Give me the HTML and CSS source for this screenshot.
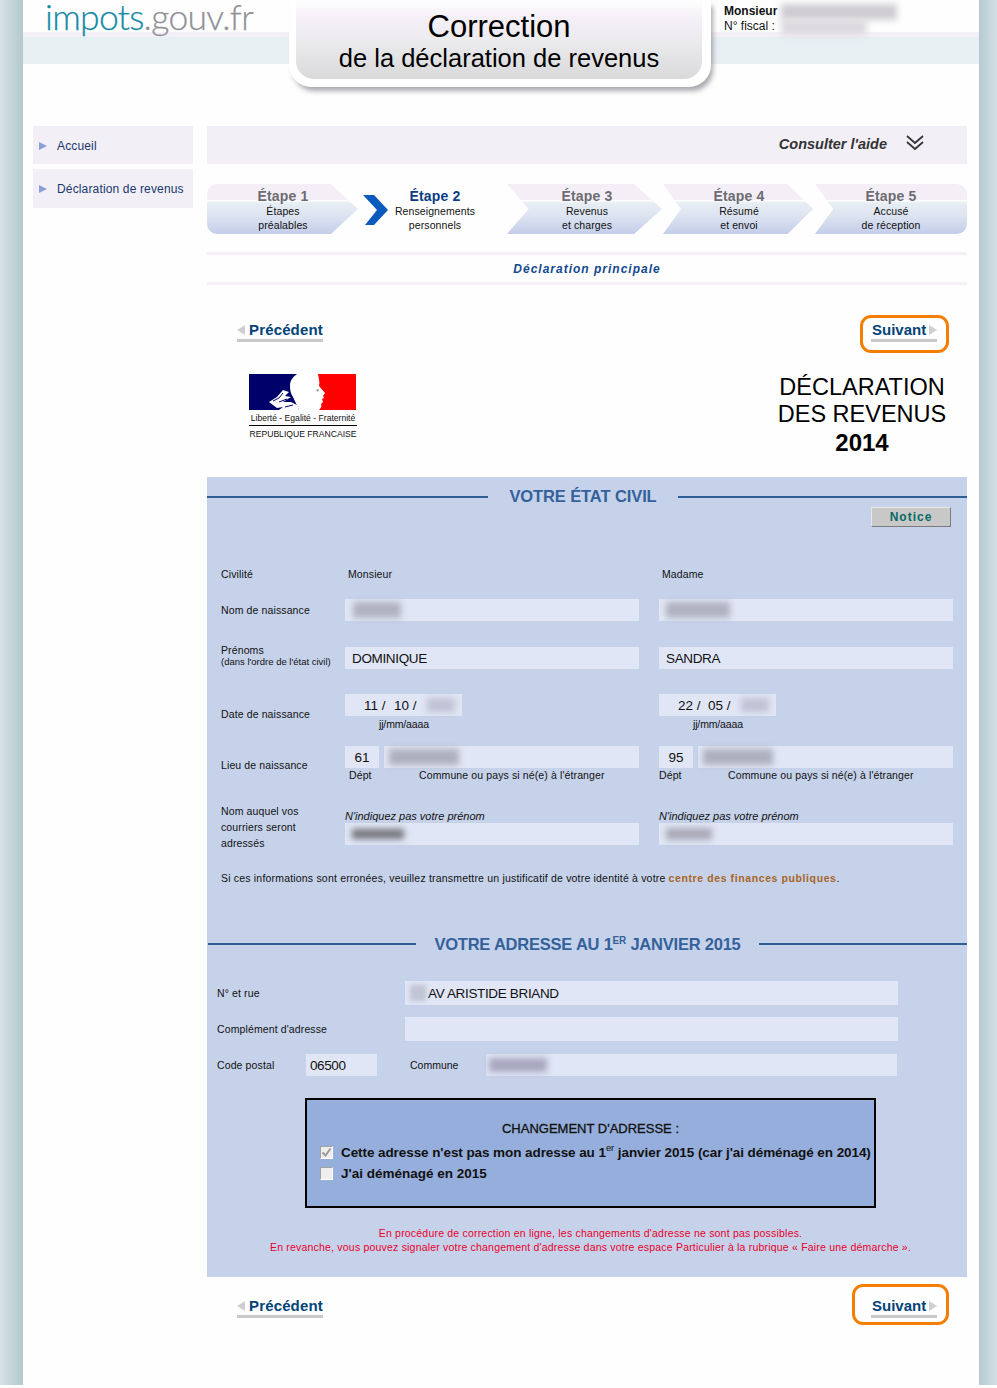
FILE: index.html
```html
<!DOCTYPE html>
<html lang="fr">
<head>
<meta charset="utf-8">
<title>Correction de la déclaration de revenus</title>
<link rel="stylesheet" href="styles.css">
</head>
<body>
<div class="shell">
<div class="page">
  <header class="header">
    <div class="logo"><span class="logo-a">impots</span><span class="logo-b">.gouv.fr</span></div>
    <div class="tab">
      <div class="tab-inner">
        <div class="tab-t1">Correction</div>
        <div class="tab-t2">de la déclaration de revenus</div>
      </div>
    </div>
    <div class="user">
      <div class="user-line"><b>Monsieur</b><span class="blur blur-user1"></span></div>
      <div class="user-line">N° fiscal :<span class="blur blur-user2"></span></div>
    </div>
  </header>

  <div class="columns">
    <nav class="side">
      <a class="side-item side-a"><i class="tri"></i>Accueil</a>
      <a class="side-item side-b"><i class="tri"></i>Déclaration de revenus</a>
    </nav>

    <main class="main">
      <div class="aide">
        <span>Consulter l'aide</span>
        <svg class="aide-ico" width="18" height="16" viewBox="0 0 18 16"><path d="M1 1l8 7 8-7M1 7l8 7 8-7" fill="none" stroke="#333" stroke-width="1.7"/></svg>
      </div>

      <div class="steps">
        <div class="step step-first"><b>Étape 1</b><span>Étapes</span><span>préalables</span></div>
        <div class="step step-active">
          <svg class="step-ico" width="26" height="30" viewBox="0 0 26 30"><path d="M0 0h11l14 15-14 15H2l12-15z" fill="#0a5bbd"/></svg>
          <b>Étape 2</b><span>Renseignements</span><span>personnels</span>
        </div>
        <div class="step step-third"><b>Étape 3</b><span>Revenus</span><span>et charges</span></div>
        <div class="step step-fourth"><b>Étape 4</b><span>Résumé</span><span>et envoi</span></div>
        <div class="step step-last"><b>Étape 5</b><span>Accusé</span><span>de réception</span></div>
      </div>

      <div class="decl-band">Déclaration principale</div>

      <div class="nav nav-top">
        <a class="link link-prev"><i class="tri-l"></i>Précédent</a>
        <div class="next-box"><a class="link link-next">Suivant<i class="tri-r"></i></a></div>
      </div>

      <div class="decl-head">
        <div class="rf">
          <svg class="rf-flag" width="107" height="36" viewBox="0 0 107 36">
            <rect width="107" height="36" fill="#fff"/>
            <path d="M0 0h48c-4 3-7 6-7 12 0 5 1 8 3 11l6 13H0z" fill="#00006b"/>
            <path d="M69 0h38v36H70c2-2 3-4 2-6l2-2-1-3 2-1-1-2 2-3-6-7c1-4 0-6-1-12z" fill="#f00"/>
            <path d="M20 28l8-5 6-7 6 2-4 4 6 1-8 5 8 0 6 3 2 5H30l4-3-6 1z" fill="#fff"/>
            <path d="M24 27l6-3 4-5M30 28l8-3M36 33l8-2" fill="none" stroke="#00006b"/>
            <path d="M67 16l3-1-1 3z" fill="#888"/>
          </svg>
          <div class="rf-motto">Liberté - Egalité - Fraternité</div>
          <div class="rf-name">REPUBLIQUE FRANCAISE</div>
        </div>
        <div class="decl-title">
          <div>DÉCLARATION</div>
          <div>DES REVENUS</div>
          <div class="decl-year">2014</div>
        </div>
      </div>

      <section class="panel">
        <h2 class="sec sec-civil"><span>VOTRE ÉTAT CIVIL</span></h2>
        <div class="notice-row"><a class="notice">Notice</a></div>

        <div class="row row-civ">
          <div class="lab">Civilité</div>
          <div class="col col-val">Monsieur</div>
          <div class="col col-val">Madame</div>
        </div>
        <div class="row row-nom">
          <div class="lab">Nom de naissance</div>
          <div class="col"><div class="field"><span class="blur blur-nom1"></span></div></div>
          <div class="col"><div class="field"><span class="blur blur-nom2"></span></div></div>
        </div>
        <div class="row row-pre">
          <div class="lab">Prénoms<small>(dans l'ordre de l'état civil)</small></div>
          <div class="col"><div class="field">DOMINIQUE</div></div>
          <div class="col"><div class="field">SANDRA</div></div>
        </div>
        <div class="row row-date">
          <div class="lab lab-low">Date de naissance</div>
          <div class="col">
            <div class="field field-date"><span class="d">11 /</span><span class="m">10 /</span><span class="blur blur-y"></span></div>
            <div class="hint hint-date">jj/mm/aaaa</div>
          </div>
          <div class="col">
            <div class="field field-date"><span class="d">22 /</span><span class="m">05 /</span><span class="blur blur-y"></span></div>
            <div class="hint hint-date">jj/mm/aaaa</div>
          </div>
        </div>
        <div class="row row-lieu">
          <div class="lab lab-lieu">Lieu de naissance</div>
          <div class="col">
            <div class="pair"><div class="field field-dep">61</div><div class="field field-com"><span class="blur blur-com"></span></div></div>
            <div class="hints"><span class="hint-dep">Dépt</span><span>Commune ou pays si né(e) à l'étranger</span></div>
          </div>
          <div class="col">
            <div class="pair"><div class="field field-dep">95</div><div class="field field-com"><span class="blur blur-com"></span></div></div>
            <div class="hints"><span class="hint-dep">Dépt</span><span>Commune ou pays si né(e) à l'étranger</span></div>
          </div>
        </div>
        <div class="row row-cour">
          <div class="lab lab-three">Nom auquel vos<br>courriers seront<br>adressés</div>
          <div class="col">
            <div class="ital">N'indiquez pas votre prénom</div>
            <div class="field"><span class="blur blur-c1"></span></div>
          </div>
          <div class="col">
            <div class="ital">N'indiquez pas votre prénom</div>
            <div class="field"><span class="blur blur-c2"></span></div>
          </div>
        </div>
        <p class="note">Si ces informations sont erronées, veuillez transmettre un justificatif de votre identité à votre <a class="note-link">centre des finances publiques</a>.</p>

        <h2 class="sec sec-addr"><span>VOTRE ADRESSE AU 1<sup>ER</sup> JANVIER 2015</span></h2>

        <div class="arow arow-rue">
          <div class="alab">N° et rue</div>
          <div class="field afield"><span class="blur blur-num"></span>AV ARISTIDE BRIAND</div>
        </div>
        <div class="arow arow-comp">
          <div class="alab">Complément d'adresse</div>
          <div class="field afield"></div>
        </div>
        <div class="arow arow-code">
          <div class="alab alab-code">Code postal</div>
          <div class="field field-cp">06500</div>
          <div class="alab alab-com">Commune</div>
          <div class="field field-commune"><span class="blur blur-commune"></span></div>
        </div>

        <div class="box">
          <div class="box-title">CHANGEMENT D'ADRESSE :</div>
          <label class="check check-a"><i class="cb"><svg width="11" height="11" viewBox="0 0 11 11"><path d="M1.5 5.5l3 3 5-7" fill="none" stroke="#9a9a9a" stroke-width="2"/></svg></i><span>Cette adresse n'est pas mon adresse au 1<sup>er</sup> janvier 2015 (car j'ai déménagé en 2014)</span></label>
          <label class="check check-b"><i class="cb"></i><span>J'ai déménagé en 2015</span></label>
        </div>

        <div class="warn">
          <div>En procédure de correction en ligne, les changements d'adresse ne sont pas possibles.</div>
          <div>En revanche, vous pouvez signaler votre changement d'adresse dans votre espace Particulier à la rubrique « Faire une démarche ».</div>
        </div>
      </section>

      <div class="nav nav-bottom">
        <a class="link link-prev"><i class="tri-l"></i>Précédent</a>
        <div class="next-box next-box-b"><a class="link link-next">Suivant<i class="tri-r"></i></a></div>
      </div>
    </main>
  </div>
</div>
</div>
</body>
</html>
```
FILE: styles.css
```css
* { box-sizing: border-box; }
html, body { margin: 0; padding: 0; background: #fefefe; }
body { font-family: "Liberation Sans", Arial, sans-serif; color: #111; height: 1388px; overflow: hidden; }
a { text-decoration: none; }

.shell {
  height: 1385px;
  padding: 0 18px 0 23px;
  background:
    linear-gradient(90deg, #b5cad0 0, #d3e0e6 100%) right top / 18px 100% no-repeat,
    linear-gradient(90deg, #d6e2e8 0, #b4c8ce 100%) left top / 23px 100% no-repeat;
}
.page { height: 100%; background: #fefefe; }

/* header */
.header {
  display: flex;
  height: 100px;
  background:
    linear-gradient(#f5eff7, #f5eff7) 0 32px / 100% 5px no-repeat,
    linear-gradient(#e6eff2, #e9f0f3) 0 37px / 100% 27px no-repeat;
}
.logo { flex: 0 0 266px; padding: 0 0 0 22px; font-family: Lato, sans-serif; font-weight: 300; font-size: 35.5px; line-height: 33px; letter-spacing: -.7px; white-space: nowrap; -webkit-text-stroke: .25px; }
.logo-a { color: #148aa8; }
.logo-b { color: #8f9296; }
.tab {
  flex: 0 0 422px;
  height: 87px;
  padding: 0 9px 8px 7px;
  background: #fff;
  border-radius: 0 0 22px 22px;
  box-shadow: 3px 5px 5px -1px rgba(90, 85, 95, .5);
}
.tab-inner {
  height: 100%;
  text-align: center;
  background: linear-gradient(#fefefe 0, #f5f0f7 22%, #ecebee 50%, #d9d9da 100%);
  border-radius: 0 0 18px 18px;
  padding-top: 9px;
}
.tab-t1 { font-size: 31px; line-height: 36px; color: #000; }
.tab-t2 { font-size: 25.5px; line-height: 30px; color: #000; margin-top: -2px; }
.user { margin-left: 13px; padding-top: 4px; font-size: 12px; line-height: 15px; position: relative; z-index: 1; }
.user-line { display: flex; align-items: center; height: 15px; white-space: nowrap; }
.user-line b { color: #111; }

.blur { display: block; filter: blur(3px); background: #a9a6ae; flex: none; }
.blur-user1 { width: 116px; height: 16px; margin-left: 4px; background: #cfcdd1; }
.blur-user2 { width: 86px; height: 16px; margin-left: 6px; background: #dcdade; }

/* columns */
.columns { display: flex; gap: 14px; padding: 26px 0 0 10px; }
.side { flex: 0 0 160px; }
.side-item { display: flex; align-items: center; background: #f3eff6; color: #17386f; font-size: 12px; letter-spacing: .15px; white-space: nowrap; padding-left: 6px; }
.side-a { height: 38px; padding-top: 1px; }
.side-b { height: 39px; margin-top: 5px; }
.tri { width: 0; height: 0; border-left: 8px solid #8a9fd8; border-top: 4.5px solid transparent; border-bottom: 4.5px solid transparent; margin-right: 10px; }
.main { flex: 0 0 760px; }

.aide {
  height: 38px;
  display: flex;
  justify-content: flex-end;
  align-items: center;
  background: #f3eff6;
  padding-right: 43px;
  font-size: 14.5px;
  font-weight: bold;
  font-style: italic;
  color: #333;
}
.aide span { margin-bottom: 2px; }
.aide-ico { margin-left: 19px; margin-bottom: 5px; }

/* steps */
.steps { display: grid; grid-template-columns: repeat(5, 152px); height: 50px; margin-top: 20px; }
.step { position: relative; display: flex; flex-direction: column; align-items: center; padding-top: 4px; font-size: 10.5px; line-height: 14px; color: #111; letter-spacing: .1px; z-index: 0; white-space: nowrap; }
.step b { font-size: 14px; line-height: 16px; color: #6c6c72; letter-spacing: .2px; }
.step::before {
  content: "";
  position: absolute;
  top: 0; bottom: 0; left: -4px; right: 1px;
  z-index: -1;
  background: linear-gradient(#f4eff7 0, #f4eff7 32%, #fdfdfe 33%, #e6edf3 38%, #dfe6f2 60%, #c3cde9 100%);
  clip-path: polygon(0 0, 82% 0, 100% 50%, 82% 100%, 0 100%, 14% 50%);
}
.step-first::before { left: 0; right: 1px; border-radius: 10px 0 0 10px; clip-path: polygon(0 0, 82% 0, 100% 50%, 82% 100%, 0 100%); }
.step-active::before { display: none; }
.step-active b { color: #0b3d84; }
.step-ico { position: absolute; left: 4px; top: 11px; }
.step-fourth::before { left: 0; right: 2px; clip-path: polygon(0 0, 83% 0, 100% 50%, 83% 100%, 0 100%, 12% 50%); }
.step-last::before { left: 0; right: 0; border-radius: 0 10px 10px 0; clip-path: polygon(0 0, 100% 0, 100% 100%, 0 100%, 12% 50%); }

.decl-band {
  height: 33px;
  margin-top: 18px;
  border-top: 3px solid #f5f0f7;
  border-bottom: 3px solid #f5f0f7;
  text-align: center;
  font-size: 12px;
  line-height: 29px;
  font-weight: bold;
  font-style: italic;
  letter-spacing: 1px;
  color: #13498f;
}

/* nav */
.nav { display: flex; justify-content: space-between; align-items: flex-start; padding: 0 18px 0 30px; }
.nav-top { margin-top: 30px; }
.nav-bottom { margin-top: 7px; }
.link { display: flex; align-items: center; height: 21px; padding-bottom: 1px; border-bottom: 3px solid #c9c9c9; font-size: 15px; font-weight: bold; color: #004379; white-space: nowrap; }
.link-prev { margin-top: 6px; letter-spacing: .15px; }
.nav-bottom .link-prev { margin-top: 13px; }
.tri-l { width: 0; height: 0; border-right: 8px solid #cfcfcf; border-top: 5px solid transparent; border-bottom: 5px solid transparent; margin-right: 4px; }
.tri-r { width: 0; height: 0; border-left: 8px solid #cfcfcf; border-top: 5px solid transparent; border-bottom: 5px solid transparent; margin-left: 3px; }
.next-box { width: 89px; height: 38px; border: 3px solid #f57d00; border-radius: 11px; padding: 3px 0 0 8px; }
.next-box .link { width: 66px; padding-left: 1px; }
.next-box-b { width: 97px; height: 41px; padding: 10px 0 0 16px; }

/* declaration head */
.decl-head { display: flex; justify-content: space-between; height: 107px; margin-top: 17px; }
.rf { margin: 4px 0 0 42px; width: 108px; text-align: center; }
.rf-flag { display: block; }
.rf-motto { font-size: 8.6px; line-height: 16px; color: #111; border-bottom: 1px solid #000; height: 16px; white-space: nowrap; }
.rf-name { font-size: 8.6px; line-height: 17px; color: #111; white-space: nowrap; }
.decl-title { width: 210px; text-align: center; font-size: 23.5px; line-height: 27px; color: #000; padding-top: 4px; }
.decl-year { font-weight: bold; line-height: 30px; font-size: 24px; }

/* panel */
.panel { height: 800px; background: #c6d2ea; padding-top: 10px; overflow: hidden; }
.sec { display: flex; align-items: center; height: 20px; margin: 0; font-size: 16.5px; font-weight: bold; color: #34619a; letter-spacing: -.1px; }
.sec::before, .sec::after { content: ""; display: block; height: 2px; background: #2f5e96; }
.sec-civil::before { flex: 0 0 281px; }
.sec-civil::after { flex: 0 0 289px; }
.sec-civil span { flex: 1; text-align: center; padding-bottom: 2px; }
.sec-addr { margin: 49px 0 0 1px; letter-spacing: -.22px; }
.sec-addr::before { flex: 0 0 208px; }
.sec-addr::after { flex: 0 0 208px; }
.sec-addr span { flex: 1; text-align: center; white-space: nowrap; padding-top: 1px; }
.sec sup { font-size: 10px; font-weight: bold; line-height: 0; vertical-align: 6px; }

.notice-row { display: flex; justify-content: flex-end; padding: 0 16px 0 0; }
.notice { width: 80px; height: 20px; background: #c8c8c8; border: 1px solid; border-color: #e8e8e8 #7b7b7b #7b7b7b #e8e8e8; text-align: center; font-size: 12px; line-height: 18px; font-weight: bold; letter-spacing: 1px; color: #0a6a66; }

.row { display: flex; padding-left: 14px; font-size: 10.5px; color: #111; letter-spacing: .12px; }
.lab { flex: 0 0 124px; align-self: center; white-space: nowrap; }
.lab small { display: block; font-size: 9.5px; line-height: 10px; letter-spacing: 0; }
.col { flex: 0 0 294px; margin-right: 20px; }
.col:last-child { margin-right: 0; }
.col-val { padding-left: 3px; align-self: center; }
.row-civ { height: 13px; margin-top: 41px; line-height: 11px; }
.row-nom { margin-top: 18px; }
.row-pre { margin-top: 26px; height: 22px; }
.row-pre .lab { line-height: 13px; padding-bottom: 5px; }
.row-date { margin-top: 25px; }
.lab-low { padding-top: 3px; }
.row-lieu { margin-top: 15px; }
.lab-lieu { padding-top: 2px; }
.row-cour { margin-top: 21px; }
.lab-three { align-self: flex-start; line-height: 16px; }

.field { display: flex; align-items: center; height: 22px; background: #e0e6f5; font-size: 13.5px; letter-spacing: -.35px; color: #111; padding-left: 7px; }
.field-date { width: 117px; }
.field-date .d { margin-left: 12px; width: 30px; letter-spacing: 0; }
.field-date .m { width: 30px; letter-spacing: 0; }
.hint { font-size: 10.5px; line-height: 14px; }
.hint-date { margin: 1px 0 0 34px; letter-spacing: -.15px; }
.pair { display: flex; gap: 5px; }
.field-dep { flex: 0 0 34px; justify-content: center; padding-left: 0; letter-spacing: 0; }
.field-com { flex: 1; }
.hints { display: flex; line-height: 14px; padding-left: 4px; }
.hint-dep { flex: 0 0 70px; }
.col:last-child .hints { padding-left: 0; }
.col:last-child .hint-dep { flex-basis: 69px; }
.ital { font-style: italic; font-size: 11px; line-height: 13px; margin-top: 7px; letter-spacing: 0; }

.blur-nom1 { width: 48px; height: 16px; margin-left: 1px; background: #b1b2c0; }
.blur-nom2 { width: 64px; height: 16px; margin-left: 0; background: #b1b2c0; }
.blur-y { width: 28px; height: 14px; margin-left: 3px; background: #c0c3d4; }
.blur-com { width: 70px; height: 16px; margin-left: -2px; background: #aeb0bd; }
.blur-c1 { width: 52px; height: 10px; background: #76767c; }
.blur-c2 { width: 46px; height: 12px; background: #aaaab6; }
.blur-num { width: 16px; height: 16px; margin: 0 2px 0 -2px; background: #c0c4d4; filter: blur(2px); }
.blur-commune { width: 58px; height: 14px; margin-left: -2px; background: #a9a6c0; }

.note { margin: 21px 0 0 14px; font-size: 10.5px; line-height: 13px; letter-spacing: .19px; color: #111; white-space: nowrap; }
.note-link { color: #a8651f; font-weight: bold; letter-spacing: .6px; }

.arow { display: flex; padding-left: 10px; font-size: 10.5px; letter-spacing: .12px; color: #111; }
.alab { flex: 0 0 188px; align-self: center; white-space: nowrap; }
.afield { flex: 0 0 493px; height: 24px; }
.arow-rue { margin-top: 27px; }
.arow-comp { margin-top: 12px; }
.arow-code { margin-top: 13px; }
.alab-code { flex: 0 0 89px; }
.field-cp { flex: 0 0 71px; padding-left: 4px; letter-spacing: -.4px; }
.alab-com { flex: 0 0 109px; padding-left: 33px; letter-spacing: 0; }
.field-commune { flex: 0 0 411px; padding-left: 5px; }

.box { width: 571px; height: 110px; margin: 22px 0 0 98px; background: #95aedb; border: 2px solid #000; padding-top: 21px; font-weight: bold; color: #111; }
.box-title { text-align: center; font-size: 13px; font-weight: normal; -webkit-text-stroke: .3px #111; line-height: 16px; }
.check { display: flex; align-items: center; height: 20px; padding-left: 13px; font-size: 13.5px; white-space: nowrap; }
.check sup { font-size: 9.5px; line-height: 0; vertical-align: 6px; font-weight: normal; }
.check-a { margin-top: 5px; letter-spacing: -.08px; }
.check-b { margin-top: 1px; }
.cb { display: flex; align-items: center; justify-content: center; width: 13px; height: 13px; margin-right: 8px; background: #eeeeee; border: 1px solid; border-color: #a0a0a0 #fff #fff #a0a0a0; }

.warn { margin-top: 18px; padding-left: 7px; text-align: center; font-size: 10.5px; line-height: 14px; color: #e8002b; letter-spacing: .2px; white-space: nowrap; }
```
